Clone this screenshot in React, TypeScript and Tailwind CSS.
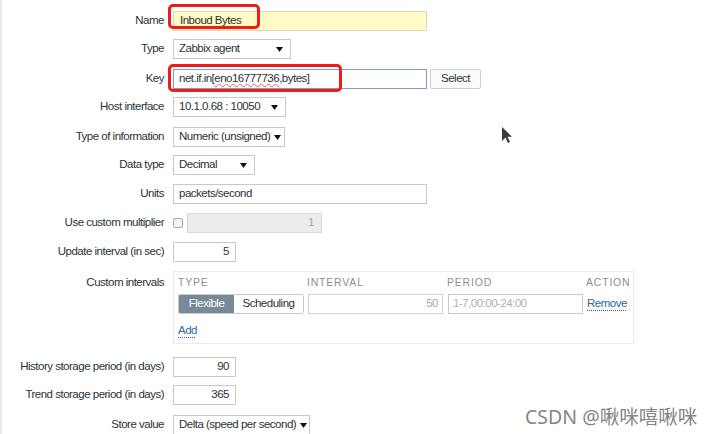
import type { ReactNode } from "react";

const font = { fontFamily: '"Liberation Sans", Arial, sans-serif' };

function Row({ label, children, top, start }: { label: string; children: ReactNode; top: string; start?: boolean }) {
  return (
    <div className={`flex ${start ? "items-start" : "items-center"} ${top}`}>
      <div className={`w-[164px] text-right whitespace-nowrap ${start ? "pt-[3px]" : ""}`}>{label}</div>
      <div className="ml-[9px] flex items-center">{children}</div>
    </div>
  );
}

function Arrow() {
  return (
    <svg width="7" height="5" viewBox="0 0 7 5" className="shrink-0">
      <path d="M0 0h7L3.5 5z" fill="#111" />
    </svg>
  );
}

function Select({ value, w }: { value: string; w: string }) {
  return (
    <div className={`${w} h-[20px] flex items-center justify-between gap-[4px] border border-[#c8c8c8] bg-white pl-[5px] pr-[7px] whitespace-nowrap`}>
      <span>{value}</span>
      <Arrow />
    </div>
  );
}

function Num({ value }: { value: string }) {
  return (
    <div className="w-[63px] h-[20px] flex items-center justify-end border border-[#c8c8c8] bg-white pr-[6px]">
      {value}
    </div>
  );
}

export default function App() {
  return (
    <div
      className="relative w-[712px] h-[434px] overflow-hidden bg-white border-l-2 border-[#ece8f2] text-[11.5px] tracking-[-0.5px] text-[#2a3338]"
      style={font}
    >
      <div className="flex flex-col pt-[11px] -ml-[2px]">
        <Row label="Name" top="">
          <div className="w-[254px] h-[20px] flex items-center border border-[#dcd8b8] bg-[#fefbc6] pl-[6px]">
            Inboud Bytes
          </div>
        </Row>
        <Row label="Type" top="mt-[8px]">
          <Select value="Zabbix agent" w="w-[118px]" />
        </Row>
        <Row label="Key" top="mt-[10px]">
          <div className="w-[254px] h-[20px] flex items-center border border-[#7d9fc4] bg-white pl-[5px] whitespace-nowrap">
            net.if.in[<span className="underline decoration-wavy decoration-[#e06060] decoration-1">eno16777736</span>,bytes]
          </div>
          <div className="ml-[3px] w-[51px] h-[20px] flex items-center justify-center border border-[#d0ccd6] rounded-[2px] bg-[#fbfbfb]">
            Select
          </div>
        </Row>
        <Row label="Host interface" top="mt-[8px]">
          <Select value="10.1.0.68 : 10050" w="w-[113px]" />
        </Row>
        <Row label="Type of information" top="mt-[10px]">
          <Select value="Numeric (unsigned)" w="w-[112px]" />
        </Row>
        <Row label="Data type" top="mt-[8px]">
          <Select value="Decimal" w="w-[82px]" />
        </Row>
        <Row label="Units" top="mt-[9px]">
          <div className="w-[254px] h-[20px] flex items-center border border-[#c8c8c8] bg-white pl-[5px]">
            packets/second
          </div>
        </Row>
        <Row label="Use custom multiplier" top="mt-[9px]">
          <div className="w-[10px] h-[10px] border border-[#aaa] rounded-[2px] bg-[#f4f4f4]" />
          <div className="ml-[4px] w-[135px] h-[20px] flex items-center justify-end border border-[#dadada] bg-[#ececec] pr-[7px] text-[#a8a8a8]">
            1
          </div>
        </Row>
        <Row label="Update interval (in sec)" top="mt-[9px]">
          <Num value="5" />
        </Row>
        <Row label="Custom intervals" top="mt-[9px]" start>
          <div className="w-[461px] h-[73px] border border-[#efeaf3] pl-[4px] pt-[3px] flex flex-col">
            <div className="flex text-[10.5px] tracking-[0.8px] text-[#8d8d93] h-[16px] items-center">
              <span className="w-[129px]">TYPE</span>
              <span className="w-[140px]">INTERVAL</span>
              <span className="w-[139px]">PERIOD</span>
              <span>ACTION</span>
            </div>
            <div className="flex items-center mt-[3px]">
              <div className="flex h-[20px] border border-[#c8c8c8] rounded-[2px] overflow-hidden">
                <div className="w-[55px] flex items-center justify-center bg-[#768a98] text-white">Flexible</div>
                <div className="w-[69px] flex items-center justify-center bg-white">Scheduling</div>
              </div>
              <div className="ml-[4px] w-[135px] h-[20px] flex items-center justify-end border border-[#d0d0d0] pr-[4px] text-[#a8a8a8]">
                50
              </div>
              <div className="ml-[5px] w-[135px] h-[20px] flex items-center border border-[#c8c8c8] pl-[4px] text-[#b0b0b0]">
                1-7,00:00-24:00
              </div>
              <span className="ml-[4px] text-[#2a69a8] underline decoration-dotted underline-offset-[3px]">Remove</span>
            </div>
            <span className="mt-[8px] text-[#2a69a8] underline decoration-dotted underline-offset-[3px] w-fit">Add</span>
          </div>
        </Row>
        <Row label="History storage period (in days)" top="mt-[13px]">
          <Num value="90" />
        </Row>
        <Row label="Trend storage period (in days)" top="mt-[8px]">
          <Num value="365" />
        </Row>
        <Row label="Store value" top="mt-[10px]">
          <Select value="Delta (speed per second)" w="w-[137px]" />
        </Row>
      </div>

      <div className="absolute left-[166px] top-[4px] w-[92px] h-[25px] border-[3px] border-[#ee1c1c] rounded-[5px]" />
      <div className="absolute left-[166px] top-[64px] w-[174px] h-[28px] border-[3px] border-[#ee1c1c] rounded-[5px]" />

      <svg className="absolute left-[498px] top-[126px]" width="14" height="19" viewBox="0 0 14 19">
        <path d="M2 1v14l3.5-3.5 2.5 5.5 2-1-2.5-5.2H12z" fill="#3a3a3e" />
      </svg>

      <div
        className="absolute left-[523px] top-[402px] text-[19.5px] tracking-normal text-[#858585]"
        style={{ fontFamily: '"Noto Sans", "Noto Sans CJK SC", sans-serif' }}
      >
        CSDN @啾咪嘻啾咪
      </div>
    </div>
  );
}
